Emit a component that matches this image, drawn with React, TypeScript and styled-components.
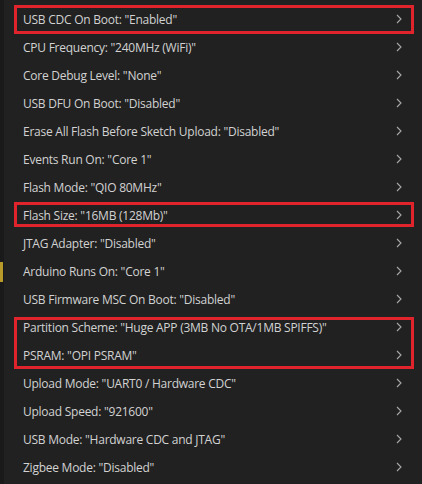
import React from 'react'
import styled, { createGlobalStyle } from 'styled-components'

const GlobalStyle = createGlobalStyle`
    html, body {
        margin: 0;
        padding: 0;
        background: #212121;
    }
`

const StyledPage = styled.div`
    width: 422px;
    height: 484px;
    display: flex;
    flex-direction: row;
    overflow: hidden;
    background: #212121;
`

const StyledEdge = styled.div`
    width: 4px;
    flex-shrink: 0;
    background: #1a1a1a;
    display: flex;
    flex-direction: column;
    padding-top: 262px;
`

const StyledEdgeMark = styled.div`
    width: 3px;
    height: 20px;
    background: #b89a2a;
`

const StyledMenu = styled.div`
    flex: 1;
    display: flex;
    flex-direction: column;
    padding-top: 5px;
`

const StyledGroup = styled.div<{ top: number, bottom: number }>`
    position: relative;

    &::after {
        content: '';
        position: absolute;
        left: 10px;
        right: 8px;
        top: ${props => props.top}px;
        bottom: ${props => props.bottom}px;
        border: 3px solid #e1232c;
        pointer-events: none;
    }
`

const StyledRow = styled.div`
    height: 28px;
    display: flex;
    align-items: center;
    padding: 0 18px 0 19px;
    font-family: "Open Sans", "Noto Sans", sans-serif;
    font-size: 12px;
    letter-spacing: -0.25px;
    color: #d2d2d2;
    white-space: nowrap;
`

const StyledLabel = styled.div`
    flex: 1;
`

const StyledChevron = styled.svg`
    width: 10px;
    height: 10px;
    flex-shrink: 0;
`

type Item = { name: string, value: string }

const items: Item[] = [
    { name: 'USB CDC On Boot', value: 'Enabled' },
    { name: 'CPU Frequency', value: '240MHz (WiFi)' },
    { name: 'Core Debug Level', value: 'None' },
    { name: 'USB DFU On Boot', value: 'Disabled' },
    { name: 'Erase All Flash Before Sketch Upload', value: 'Disabled' },
    { name: 'Events Run On', value: 'Core 1' },
    { name: 'Flash Mode', value: 'QIO 80MHz' },
    { name: 'Flash Size', value: '16MB (128Mb)' },
    { name: 'JTAG Adapter', value: 'Disabled' },
    { name: 'Arduino Runs On', value: 'Core 1' },
    { name: 'USB Firmware MSC On Boot', value: 'Disabled' },
    { name: 'Partition Scheme', value: 'Huge APP (3MB No OTA/1MB SPIFFS)' },
    { name: 'PSRAM', value: 'OPI PSRAM' },
    { name: 'Upload Mode', value: 'UART0 / Hardware CDC' },
    { name: 'Upload Speed', value: '921600' },
    { name: 'USB Mode', value: 'Hardware CDC and JTAG' },
    { name: 'Zigbee Mode', value: 'Disabled' },
]

// highlighted groups: [start index, count, top inset, bottom inset]
const groups: [number, number, number, number][] = [
    [0, 1, 0, -1],
    [7, 1, 1, 2],
    [11, 2, 4, 0],
]

const Row = ({ item }: { item: Item }) => (
    <StyledRow>
        <StyledLabel>{item.name}: "{item.value}"</StyledLabel>
        <StyledChevron viewBox="0 0 10 10">
            <path d="M3 1 L7 5 L3 9" fill="none" stroke="#a8a8a8" strokeWidth="1.1" />
        </StyledChevron>
    </StyledRow>
)

const App = () => {
    const blocks: React.ReactNode[] = []
    let i = 0
    while (i < items.length) {
        const group = groups.find(g => g[0] === i)
        if (group) {
            const rows = items.slice(i, i + group[1])
            blocks.push(
                <StyledGroup key={i} top={group[2]} bottom={group[3]}>
                    {rows.map(item => <Row key={item.name} item={item} />)}
                </StyledGroup>
            )
            i += group[1]
        } else {
            blocks.push(<Row key={items[i].name} item={items[i]} />)
            i++
        }
    }

    return (<>
        <GlobalStyle />
        <StyledPage>
            <StyledEdge>
                <StyledEdgeMark />
            </StyledEdge>
            <StyledMenu>
                {blocks}
            </StyledMenu>
        </StyledPage>
    </>)
}

export default App
